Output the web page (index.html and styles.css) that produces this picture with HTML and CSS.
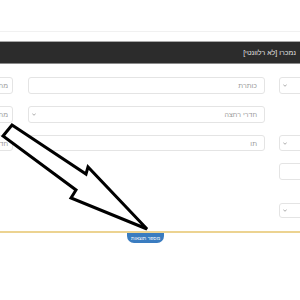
FILE: index.html
```html
<!DOCTYPE html>
<html lang="he" dir="rtl">
<head>
<meta charset="utf-8">
<link rel="stylesheet" href="styles.css">
</head>
<body>
<div class="page">
  <div class="topline"></div>
  <div class="bar"><span class="bar-title">נמכרו [לא רלוונטי]</span></div>
  <div class="form">
    <div class="field sel col-r row-a"><svg class="chev" viewBox="0 0 4 3"><polyline points="0.3,0.5 2,2.3 3.7,0.5"/></svg></div>
    <div class="field col-m row-a"><span class="ph">כותרת</span></div>
    <div class="field col-l row-a"><span class="ph">מחיר מ</span></div>

    <div class="field sel col-m row-b"><span class="ph">חדרי רחצה</span><svg class="chev" viewBox="0 0 4 3"><polyline points="0.3,0.5 2,2.3 3.7,0.5"/></svg></div>
    <div class="field col-l row-b"><span class="ph">מחיר עד</span></div>

    <div class="field sel col-r row-c"><svg class="chev" viewBox="0 0 4 3"><polyline points="0.3,0.5 2,2.3 3.7,0.5"/></svg></div>
    <div class="field col-m row-c"><span class="ph">תו</span></div>
    <div class="field col-l row-c"><span class="ph">חדרים</span></div>

    <div class="field col-r row-d"></div>

    <div class="field sel col-r row-e"><svg class="chev" viewBox="0 0 4 3"><polyline points="0.3,0.5 2,2.3 3.7,0.5"/></svg></div>
  </div>
  <div class="footer"><div class="tab">מספר תוצאות</div></div>
  <svg class="arrow" viewBox="0 0 300 300" width="300" height="300">
    <polygon points="12,125 86,174 88,167 147,229 71,198 76,190 3,136"/>
  </svg>
</div>
</body>
</html>
```
FILE: styles.css
```css
html, body {
  margin: 0;
  padding: 0;
  background: #ffffff;
}
body {
  width: 300px;
  height: 300px;
  overflow: hidden;
  font-family: "Liberation Sans", "DejaVu Sans", sans-serif;
}
.page {
  position: relative;
  width: 300px;
  height: 300px;
  direction: rtl;
  overflow: hidden;
}
.topline {
  height: 31px;
  border-bottom: 1px solid #f1f1f1;
}
.bar {
  margin-top: 9px;
  height: 21px;
  background: #2c2c2c;
  border-top: 1px solid #a8a8a8;
  border-bottom: 1px solid #8a8a8a;
  display: flex;
  align-items: center;
  padding-right: 4px;
}
.bar-title {
  color: #e6e6e6;
  font-size: 7px;
}
.form {
  margin-top: 13px;
  margin-right: -19px;
  width: 346px;
  display: grid;
  grid-template-columns: 40px 14px 237px 15px 40px;
  grid-template-rows: 17px 17px 16px 17px 26px;
  row-gap: 12px;
}
.field {
  box-sizing: border-box;
  border: 1px solid #e4e4e4;
  border-radius: 3px;
  background: #fff;
  display: flex;
  align-items: center;
  justify-content: space-between;
  padding: 0 7px 0 3px;
}
.col-r { grid-column: 1; }
.col-m { grid-column: 3; }
.col-l { grid-column: 5; padding-right: 4px; }
.row-a { grid-row: 1; }
.row-b { grid-row: 2; }
.row-c { grid-row: 3; }
.row-d { grid-row: 4; }
.row-e { grid-row: 5; align-self: end; height: 15px; }
.ph {
  font-size: 7px;
  color: #9a9a9a;
  white-space: nowrap;
}
.col-r.sel {
  justify-content: flex-end;
}
.chev {
  width: 4px;
  height: 3px;
  fill: none;
  stroke: #8a8a8a;
  stroke-width: 0.7;
  flex: none;
}
.footer {
  margin-top: 13px;
  border-top: 2px solid #ecd391;
  display: flex;
  justify-content: center;
  padding-right: 9px;
}
.tab {
  background: #3a7cc0;
  color: #ffffff;
  font-size: 5px;
  height: 10px;
  line-height: 10px;
  padding: 0 4px;
  border-radius: 0 0 7px 7px;
  white-space: nowrap;
}
.arrow {
  position: absolute;
  top: 0;
  left: 0;
  pointer-events: none;
}
.arrow polygon {
  fill: #ffffff;
  stroke: #000000;
  stroke-width: 3;
  stroke-linejoin: miter;
}
```
